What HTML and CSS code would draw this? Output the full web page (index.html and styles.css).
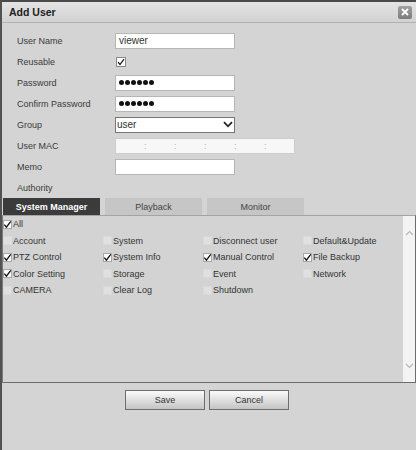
FILE: index.html
```html
<!DOCTYPE html>
<html>
<head>
<meta charset="utf-8">
<title>Add User</title>
<link rel="stylesheet" href="styles.css">
</head>
<body>
<div class="dialog">
  <div class="titlebar">
    <span class="title">Add User</span>
    <span class="close"><svg width="8" height="8" viewBox="0 0 8 8"><path d="M1 1L7 7M7 1L1 7" stroke="#fff" stroke-width="1.8"/></svg></span>
  </div>

  <div class="form">
    <div class="label">User Name</div>
    <div class="field"><div class="input">viewer</div></div>

    <div class="label">Reusable</div>
    <div class="field"><span class="fcb"><svg width="8" height="8" viewBox="0 0 8 8"><polyline points="1,4.2 3,6.5 7,1.2" fill="none" stroke="#111" stroke-width="1.2"/></svg></span></div>

    <div class="label">Password</div>
    <div class="field"><div class="input dots"><i></i><i></i><i></i><i></i><i></i><i></i></div></div>

    <div class="label">Confirm Password</div>
    <div class="field"><div class="input dots"><i></i><i></i><i></i><i></i><i></i><i></i></div></div>

    <div class="label">Group</div>
    <div class="field"><div class="input select"><span>user</span><svg width="10" height="7" viewBox="0 0 10 7"><polyline points="1,1.2 5,5.3 9,1.2" fill="none" stroke="#222" stroke-width="1.8"/></svg></div></div>

    <div class="label">User MAC</div>
    <div class="field"><div class="mac"><span>:</span><span>:</span><span>:</span><span>:</span><span>:</span></div></div>

    <div class="label">Memo</div>
    <div class="field"><div class="input"></div></div>

    <div class="label">Authority</div>
    <div class="field"></div>
  </div>

  <div class="tabs">
    <div class="tab active">System Manager</div>
    <div class="tab">Playback</div>
    <div class="tab">Monitor</div>
  </div>

  <div class="panel">
    <div class="perm">
      <div class="cbrow"><span class="cb on"><svg width="9" height="9" viewBox="0 0 9 9"><polyline points="1.3,4.6 3.4,7.2 7.8,1.4" fill="none" stroke="#111" stroke-width="1.3"/></svg></span>All</div>
      <div class="grid">
        <div class="item"><span class="cb"></span>Account</div>
        <div class="item"><span class="cb"></span>System</div>
        <div class="item"><span class="cb"></span>Disconnect user</div>
        <div class="item"><span class="cb"></span>Default&amp;Update</div>

        <div class="item"><span class="cb on"><svg width="9" height="9" viewBox="0 0 9 9"><polyline points="1.3,4.6 3.4,7.2 7.8,1.4" fill="none" stroke="#111" stroke-width="1.3"/></svg></span>PTZ Control</div>
        <div class="item"><span class="cb on"><svg width="9" height="9" viewBox="0 0 9 9"><polyline points="1.3,4.6 3.4,7.2 7.8,1.4" fill="none" stroke="#111" stroke-width="1.3"/></svg></span>System Info</div>
        <div class="item"><span class="cb on"><svg width="9" height="9" viewBox="0 0 9 9"><polyline points="1.3,4.6 3.4,7.2 7.8,1.4" fill="none" stroke="#111" stroke-width="1.3"/></svg></span>Manual Control</div>
        <div class="item"><span class="cb on"><svg width="9" height="9" viewBox="0 0 9 9"><polyline points="1.3,4.6 3.4,7.2 7.8,1.4" fill="none" stroke="#111" stroke-width="1.3"/></svg></span>File Backup</div>

        <div class="item"><span class="cb on"><svg width="9" height="9" viewBox="0 0 9 9"><polyline points="1.3,4.6 3.4,7.2 7.8,1.4" fill="none" stroke="#111" stroke-width="1.3"/></svg></span>Color Setting</div>
        <div class="item"><span class="cb"></span>Storage</div>
        <div class="item"><span class="cb"></span>Event</div>
        <div class="item"><span class="cb"></span>Network</div>

        <div class="item"><span class="cb"></span>CAMERA</div>
        <div class="item"><span class="cb"></span>Clear Log</div>
        <div class="item"><span class="cb"></span>Shutdown</div>
      </div>
    </div>
    <div class="scroll">
      <svg width="9" height="6" viewBox="0 0 9 6"><polyline points="1,5 4.5,1.5 8,5" fill="none" stroke="#b8b8b8" stroke-width="1.2"/></svg>
      <svg width="9" height="6" viewBox="0 0 9 6"><polyline points="1,1 4.5,4.5 8,1" fill="none" stroke="#b8b8b8" stroke-width="1.2"/></svg>
    </div>
  </div>

  <div class="buttons">
    <button class="btn">Save</button>
    <button class="btn">Cancel</button>
  </div>
</div>
</body>
</html>
```

FILE: styles.css
```css
html, body {
  margin: 0;
  padding: 0;
  background: #d4d4d4;
}

.dialog {
  width: 416px;
  height: 450px;
  box-sizing: border-box;
  border-top: 2px solid #4a4a4a;
  border-left: 2px solid #525252;
  background: #d4d4d4;
  font-family: "Liberation Sans", Arial, sans-serif;
  font-size: 9px;
  color: #333;
  overflow: hidden;
}

.titlebar {
  height: 20px;
  display: flex;
  align-items: center;
  justify-content: space-between;
  padding: 0 4px 0 7px;
  background: linear-gradient(#e4e4e4, #d2d2d2);
  border-bottom: 1px solid #b2b2b2;
}

.title {
  font-weight: bold;
  font-size: 10.5px;
  color: #222;
}

.close {
  width: 14px;
  height: 13px;
  border-radius: 2px;
  background: linear-gradient(#a2a2a2, #7c7c7c);
  display: flex;
  align-items: center;
  justify-content: center;
}

.form {
  display: grid;
  grid-template-columns: 98px 1fr;
  grid-auto-rows: 21px;
  align-items: center;
  margin-top: 7px;
  padding-left: 15px;
}

.label {
  color: #3a3a3a;
}

.field {
  display: flex;
  align-items: center;
}

.input {
  width: 120px;
  height: 16px;
  box-sizing: border-box;
  background: #fff;
  border: 1px solid #b6b6b6;
  font-size: 10px;
  line-height: 14px;
  padding-left: 3px;
  color: #333;
}

.dots {
  display: flex;
  align-items: center;
  gap: 1px;
}

.dots i {
  width: 5px;
  height: 5px;
  border-radius: 50%;
  background: #111;
}

.select {
  border-color: #777;
  display: flex;
  align-items: center;
  justify-content: space-between;
  padding: 0 1px 0 1px;
}

.fcb {
  width: 10px;
  height: 10px;
  box-sizing: border-box;
  margin-left: 1px;
  background: #fff;
  border: 1px solid #8a8a8a;
  display: flex;
  align-items: center;
  justify-content: center;
}

.mac {
  width: 180px;
  height: 16px;
  box-sizing: border-box;
  background: #f7f7f7;
  border: 1px solid #cdcdcd;
  display: flex;
  align-items: center;
  gap: 28px;
  padding-left: 28px;
  color: #b0b0b0;
  font-size: 9px;
}

.mac span {
  width: 2px;
}

.tabs {
  display: flex;
  gap: 5px;
  margin-left: 1px;
  height: 17px;
}

.tab {
  width: 97px;
  display: flex;
  align-items: center;
  justify-content: center;
  background: #c6c6c6;
  color: #444;
}

.tab.active {
  background: #3b3b3b;
  color: #fff;
  font-weight: bold;
}

.panel {
  height: 168px;
  box-sizing: border-box;
  border: 1px solid #6c6c6c;
  border-top-color: #a4a4a4;
  border-left-color: #7a7a7a;
  display: flex;
  background: #d3d3d3;
}

.perm {
  flex: 1;
  color: #333;
}

.cbrow {
  height: 16.5px;
  display: flex;
  align-items: center;
}

.grid {
  display: grid;
  grid-template-columns: repeat(4, 100px);
  grid-auto-rows: 16.5px;
}

.item {
  display: flex;
  align-items: center;
  white-space: nowrap;
}

.cb {
  width: 9px;
  height: 9px;
  box-sizing: border-box;
  margin-right: 1px;
  background: #e0e0e0;
  border: 1px solid #d9d9d9;
  display: flex;
  align-items: center;
  justify-content: center;
}

.cb svg {
  flex: none;
}

.cb.on {
  background: #fafafa;
  border-color: #a8a8a8;
}

.scroll {
  width: 13px;
  background: #f3f3f3;
  display: flex;
  flex-direction: column;
  justify-content: space-between;
  align-items: center;
  padding: 14px 0 13px;
  box-sizing: border-box;
}

.buttons {
  display: flex;
  justify-content: center;
  gap: 4px;
  margin-top: 7px;
  padding-right: 4px;
}

.btn {
  width: 80px;
  height: 20px;
  padding: 0;
  margin: 0;
  border: 1px solid #6e6e6e;
  border-radius: 0;
  background: linear-gradient(#fbfbfb, #c4c4c4);
  font-family: "Liberation Sans", Arial, sans-serif;
  font-size: 9px;
  color: #333;
}
```
